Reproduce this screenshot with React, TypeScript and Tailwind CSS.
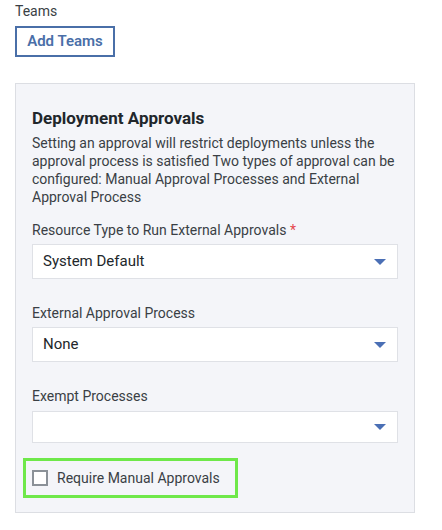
const Caret = () => (
  <svg width="12" height="6" viewBox="0 0 12 6" className="shrink-0">
    <path d="M0 0 L12 0 L6 6 Z" fill="#4a6fb5" />
  </svg>
);

const Select = ({ value, h = "h-[35px]" }: { value?: string; h?: string }) => (
  <div
    className={`flex ${h} items-center justify-between border border-[#dfe1e6] bg-white pl-[10px] pr-[11px] text-[15px] text-[#22272b]`}
  >
    <span>{value}</span>
    <Caret />
  </div>
);

export default function App() {
  return (
    <div className="min-h-[530px] bg-white px-[15px] pt-[2px] font-['Roboto',sans-serif] text-[#3a3f45]">
      <div className="text-[14px] leading-[18px]">Teams</div>
      <button className="mt-[6px] h-[31px] w-[100px] border-2 border-[#4a6fa8] text-[15px] font-semibold text-[#4a6fa8]">
        Add Teams
      </button>

      <div className="mt-[26px] w-[400px] border border-[#dcdee3] bg-[#f4f5f9] px-[16px] pb-[14px] pt-[22px]">
        <h2 className="text-[17px] font-bold leading-[24px] text-[#21262b]">
          Deployment Approvals
        </h2>
        <p className="mt-[4px] text-[14px] leading-[18px]">
          Setting an approval will restrict deployments unless the approval
          process is satisfied Two types of approval can be configured: Manual
          Approval Processes and External Approval Process
        </p>

        <div className="mt-[15px] text-[14px] leading-[18px]">
          Resource Type to Run External Approvals{" "}
          <span className="text-[#e5484d]">*</span>
        </div>
        <div className="mt-[5px]">
          <Select value="System Default" />
        </div>

        <div className="mt-[25px] text-[14px] leading-[18px]">
          External Approval Process
        </div>
        <div className="mt-[5px]">
          <Select value="None" />
        </div>

        <div className="mt-[25px] text-[14px] leading-[18px]">
          Exempt Processes
        </div>
        <div className="mt-[6px]">
          <Select h="h-[32px]" />
        </div>

        <div className="-ml-[9px] mt-[15px] flex h-[40px] w-[215px] items-center gap-[9px] border-[3px] border-[#6fe84a] pl-[6px]">
          <span className="h-[16px] w-[16px] border-2 border-[#8b9198] bg-white" />
          <span className="text-[14px] text-[#3a3f45]">
            Require Manual Approvals
          </span>
        </div>
      </div>
    </div>
  );
}
